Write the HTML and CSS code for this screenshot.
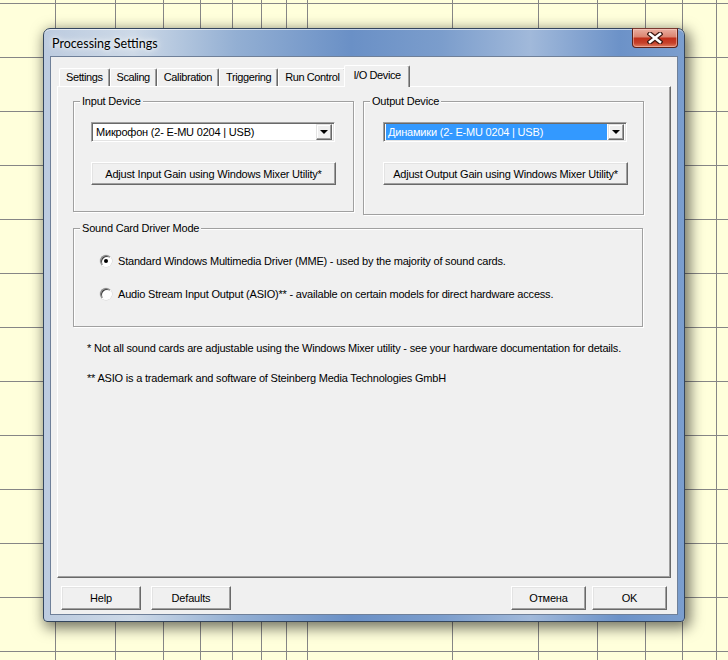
FILE: index.html
```html
<!DOCTYPE html>
<html lang="en">
<head>
    <meta charset="UTF-8">
    <title>Processing Settings</title>
    <link rel="stylesheet" href="styles.css">
</head>
<body>
<div class="sheet">
    <div class="col"></div><div class="col"></div><div class="col"></div><div class="col"></div>
    <div class="col"></div><div class="col"></div><div class="col"></div><div class="col"></div>
    <div class="col"></div><div class="col"></div><div class="col"></div><div class="col"></div>
    <div class="col"></div><div class="col"></div><div class="col"></div>
</div>

<div class="window">
    <div class="titlebar">
        <span class="title">Processing Settings</span>
        <div class="closebtn">
            <svg width="16" height="12" viewBox="0 0 16 12">
                <path d="M3 2 L13 10 M13 2 L3 10" stroke="#3b1710" stroke-width="5" stroke-linecap="square"/>
                <path d="M3 2 L13 10 M13 2 L3 10" stroke="#fff" stroke-width="2.6" stroke-linecap="square"/>
            </svg>
        </div>
    </div>

    <div class="client">
        <div class="tabs">
            <div class="tab">Settings</div>
            <div class="tab">Scaling</div>
            <div class="tab">Calibration</div>
            <div class="tab">Triggering</div>
            <div class="tab">Run Control</div>
            <div class="tab active">I/O Device</div>
        </div>

        <div class="page">
            <div class="d-row">
                <fieldset class="group dev">
                    <legend>Input Device</legend>
                    <div class="combo">
                        <span class="combo-text">Микрофон (2- E-MU 0204 | USB)</span>
                        <span class="drop"></span>
                    </div>
                    <button class="btn gain">Adjust Input Gain using Windows Mixer Utility*</button>
                </fieldset>
                <fieldset class="group dev out">
                    <legend>Output Device</legend>
                    <div class="combo">
                        <span class="combo-text sel">Динамики (2- E-MU 0204 | USB)</span>
                        <span class="drop"></span>
                    </div>
                    <button class="btn gain">Adjust Output Gain using Windows Mixer Utility*</button>
                </fieldset>
            </div>

            <fieldset class="group mode">
                <legend>Sound Card Driver Mode</legend>
                <label class="radio"><span class="circle on"></span>Standard Windows Multimedia Driver (MME) - used by the majority of sound cards.</label>
                <label class="radio"><span class="circle"></span>Audio Stream Input Output (ASIO)** - available on certain models for direct hardware access.</label>
            </fieldset>

            <p class="note">* Not all sound cards are adjustable using the Windows Mixer utility - see your hardware documentation for details.</p>
            <p class="note second">** ASIO is a trademark and software of Steinberg Media Technologies GmbH</p>
        </div>

        <div class="buttons">
            <button class="btn bottom">Help</button>
            <button class="btn bottom">Defaults</button>
            <div class="spacer"></div>
            <button class="btn bottom narrow">Отмена</button>
            <button class="btn bottom narrow">OK</button>
        </div>
    </div>
</div>
</body>
</html>
```

FILE: styles.css
```css
* {
    box-sizing: border-box;
}

body {
    margin: 0;
    overflow: hidden;
    font-family: "Liberation Sans", Arial, sans-serif;
    font-size: 11px;
    letter-spacing: -0.2px;
    color: #000;
}

/* spreadsheet behind the dialog */
.sheet {
    height: 660px;
    display: grid;
    grid-template-columns: 56px 60px 48px 37px 32px 29px 25px 21px 145px 86px 59px 48px 37px 34px 1fr;
    background-color: #ffffdb;
    background-image: linear-gradient(#868686 1px, transparent 1px);
    background-size: 100% 54px;
    background-position: 0 3px;
}

.sheet .col {
    border-right: 1px solid #868686;
}

.sheet .col:last-child {
    border-right: 0;
}

/* window frame */
.window {
    position: absolute;
    left: 43px;
    top: 28px;
    width: 642px;
    height: 594px;
    border: 1px solid #34465e;
    border-radius: 7px 7px 4px 4px;
    padding: 0 6px 6px;
    background: linear-gradient(to right, #bccbdf 0%, #cdd9e7 14%, #93afd3 30%, #6a90c6 48%, #7b9dcc 62%, #a1b9da 76%, #6c92c8 90%, #7b9ece 100%);
    box-shadow: 3px 4px 14px 2px rgba(0, 0, 0, 0.55), inset 0 1px 0 rgba(255, 255, 255, 0.6);
}

.titlebar {
    height: 27px;
    display: flex;
    justify-content: space-between;
    align-items: flex-start;
}

.title {
    margin-top: 7px;
    padding-left: 2px;
    font-family: "Lato", "Noto Sans", sans-serif;
    font-size: 12.5px;
    letter-spacing: 0;
    color: #000;
    text-shadow: 0 0 8px #fff, 0 0 4px #fff;
}

.closebtn {
    margin-top: -1px;
    width: 46px;
    height: 20px;
    border: 1px solid #5c2219;
    border-top-color: #7a3a30;
    border-radius: 0 0 4px 4px;
    background: linear-gradient(#eaaea0 0%, #dc8672 42%, #c1301b 52%, #c6412a 78%, #e07e62 100%);
    box-shadow: inset 0 0 0 1px rgba(255, 220, 210, 0.45);
    display: flex;
    align-items: center;
    justify-content: center;
}

/* client area */
.client {
    height: 559px;
    border: 1px solid #6f8099;
    background: #f0f0f0;
    padding: 8px 6px 0;
    display: flex;
    flex-direction: column;
}

.tabs {
    display: flex;
    align-items: flex-end;
    height: 21px;
    padding-left: 2px;
    position: relative;
    z-index: 1;
}

.tab {
    height: 18px;
    padding: 0 6px;
    line-height: 16px;
    letter-spacing: -0.4px;
    background: #f0f0f0;
    border-top: 1px solid #fff;
    border-left: 1px solid #fff;
    border-right: 1px solid #696969;
    border-radius: 2px 2px 0 0;
    box-shadow: inset -1px 0 0 #a0a0a0;
    white-space: nowrap;
}

.tab.active {
    height: 22px;
    margin: 0 -2px -1px;
    padding: 1px 8px 0;
    position: relative;
    z-index: 2;
}

.page {
    height: 492px;
    border: 1px solid;
    border-color: #fff #696969 #696969 #fff;
    box-shadow: inset -1px -1px 0 #a0a0a0;
    padding: 8px 15px 0;
}

.d-row {
    display: flex;
    gap: 9px;
    align-items: flex-start;
}

/* etched group boxes */
.group {
    margin: 0;
    padding: 0;
    min-width: 0;
    border: 1px solid #a0a0a0;
    box-shadow: inset 1px 1px 0 #fff, 1px 1px 0 #fff;
}

.group legend {
    margin-left: 6px;
    padding: 0 2px;
    line-height: 13px;
    background: #f0f0f0;
}

.dev {
    width: 281px;
    padding: 14px 0 26px;
}

.dev .combo,
.dev .gain {
    margin-left: 17px;
}

.dev.out {
    padding-bottom: 29px;
}

.dev.out .combo,
.dev.out .gain {
    margin-left: 19px;
}

.combo {
    width: 244px;
    height: 20px;
    display: flex;
    align-items: center;
    padding: 1px 2px 1px 2px;
    background: #fff;
    border: 1px solid;
    border-color: #a0a0a0 #fff #fff #a0a0a0;
    box-shadow: inset 1px 1px 0 #696969, inset -1px -1px 0 #e3e3e3;
}

.combo-text {
    flex: 1;
    height: 16px;
    line-height: 16px;
    padding-left: 2px;
    white-space: nowrap;
    overflow: hidden;
}

.combo-text.sel {
    background: #3399ff;
    color: #fff;
    margin-right: 1px;
}

.drop {
    width: 16px;
    height: 16px;
    background: #f0f0f0;
    border: 1px solid;
    border-color: #e3e3e3 #696969 #696969 #e3e3e3;
    box-shadow: inset -1px -1px 0 #a0a0a0, inset 1px 1px 0 #fff;
    position: relative;
}

.drop:after {
    content: '';
    position: absolute;
    left: 3px;
    top: 5px;
    border-left: 4px solid transparent;
    border-right: 4px solid transparent;
    border-top: 4px solid #000;
}

/* classic 3D buttons */
.btn {
    font-family: "Liberation Sans", Arial, sans-serif;
    font-size: 11px;
    letter-spacing: -0.2px;
    color: #000;
    background: #f0f0f0;
    border: 1px solid;
    border-color: #fff #696969 #696969 #fff;
    box-shadow: inset -1px -1px 0 #a0a0a0, inset 1px 1px 0 #e3e3e3;
    padding: 0;
    white-space: nowrap;
}

.gain {
    display: block;
    width: 245px;
    height: 23px;
    margin-top: 20px;
}

.mode {
    width: 570px;
    margin-top: 7px;
    padding: 18px 0 24px;
}

.radio {
    display: flex;
    align-items: center;
    height: 16px;
    margin-left: 26px;
}

.radio + .radio {
    margin-top: 17px;
}

.circle {
    width: 12px;
    height: 12px;
    margin-right: 6px;
    border-radius: 50%;
    border: 1px solid;
    border-color: #808080 #fff #fff #808080;
    background: #fff;
    box-shadow: inset 1px 1px 0 #404040, 0 0 0 0.5px #d4d4d4;
    display: flex;
    align-items: center;
    justify-content: center;
}

.circle.on:after {
    content: '';
    width: 4px;
    height: 4px;
    border-radius: 50%;
    background: #000;
}

.note {
    margin: 14px 0 0 14px;
    line-height: 14px;
}

.note.second {
    margin-top: 16px;
}

.buttons {
    display: flex;
    gap: 10px;
    margin-top: 8px;
    padding: 0 4px;
}

.bottom {
    width: 80px;
    height: 24px;
}

.bottom.narrow {
    width: 75px;
}

.spacer {
    flex: 1;
}

.buttons .narrow + .narrow {
    margin-left: -4px;
}
```
